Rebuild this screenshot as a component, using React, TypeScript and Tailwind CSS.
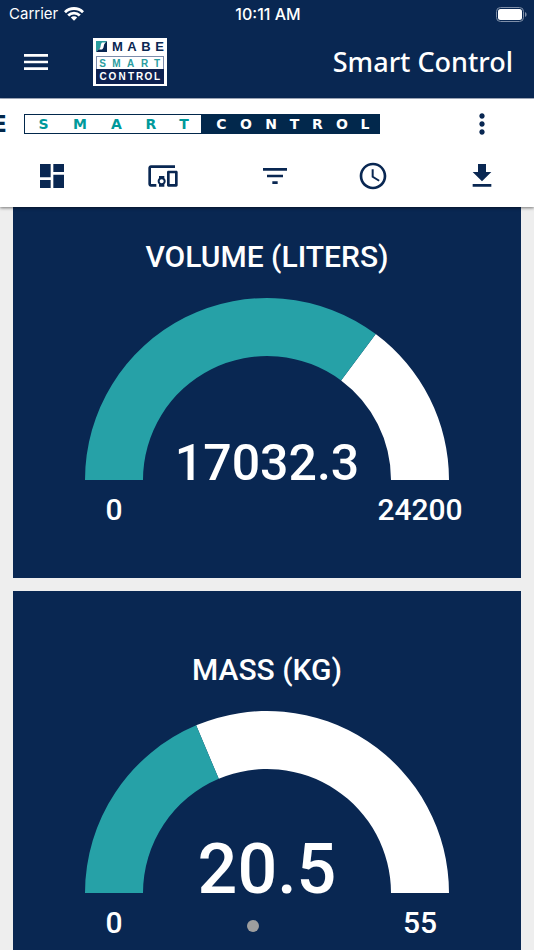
import {
  MdAccessTime,
  MdDashboard,
  MdDevicesOther,
  MdFileDownload,
  MdFilterList,
  MdMenu,
  MdMoreVert,
} from 'react-icons/md';

interface Gauge {
  title: string;
  value: number;
  max: number;
  fontSize: number;
}

const gauges: Gauge[] = [
  { title: 'VOLUME (LITERS)', value: 17032.3, max: 24200, fontSize: 50 },
  { title: 'MASS (KG)', value: 20.5, max: 55, fontSize: 70 },
];

const actions = [
  { label: 'Dashboards', Icon: MdDashboard },
  { label: 'Entities', Icon: MdDevicesOther },
  { label: 'Filters', Icon: MdFilterList },
  { label: 'Time window', Icon: MdAccessTime },
  { label: 'Export', Icon: MdFileDownload },
];

const OUTER = 182;
const INNER = 124;

// half ring slice between two fractions of the dial, 0 = left, 1 = right
const arcPath = (from: number, to: number) => {
  const point = (r: number, f: number) => {
    const a = Math.PI * (1 - f);
    return `${OUTER + r * Math.cos(a)} ${OUTER - r * Math.sin(a)}`;
  };
  return `M${point(OUTER, from)}A${OUTER} ${OUTER} 0 0 1 ${point(OUTER, to)}L${point(INNER, to)}A${INNER} ${INNER} 0 0 0 ${point(INNER, from)}Z`;
};

const StatusBar = () => (
  <div className="grid grid-cols-3 items-center h-7 pl-[9px] pr-[7px] font-['Inter',sans-serif] text-[15px] leading-5">
    <div className="flex items-center gap-1.5">
      <span>Carrier</span>
      <svg viewBox="0 0 20 14" className="w-5 h-[14px]" fill="none" stroke="currentColor" strokeWidth="2.8">
        <path d="M1 5.2a12.8 12.8 0 0 1 18 0" />
        <path d="M4.2 8.6a8.2 8.2 0 0 1 11.6 0" />
        <path d="M10 13.8 6.8 10.6a4.5 4.5 0 0 1 6.400 0z" fill="currentColor" stroke="none" />
      </svg>
    </div>
    <span className="text-center font-medium text-base leading-5">10:11 AM</span>
    <svg viewBox="0 0 31 15" className="w-[31px] h-[15px] justify-self-end">
      <rect x="0.5" y="0.5" width="27" height="14" rx="4" fill="none" stroke="#7f8fa8" />
      <rect x="2" y="2" width="24" height="11" rx="2.5" fill="#fff" />
      <path d="M29 5v5c1-.4 1.600-1.400 1.600-2.500s-.6-2.100-1.600-2.500z" fill="#7f8fa8" />
    </svg>
  </div>
);

const Logo = () => (
  <svg viewBox="0 0 74 48" className="w-[74px] h-12" fontFamily="Liberation Sans, sans-serif" fontWeight="bold" textAnchor="middle">
    <rect width="74" height="48" fill="#fff" />
    <path d="M3 3h11L3 14z" fill="#2a9d9f" />
    <path d="M14 3v11H3z" fill="#092752" />
    <path d="M6 11.500c2.500-2 1-5 3-7h3.500c-2.500 2-1 5.500-3.500 7z" fill="#fff" />
    <text x="24.500 39 53 66.500" y="13" fontSize="13" fill="#092752">MABE</text>
    <rect x="3.500" y="18.500" width="67" height="27" fill="#fff" stroke="#7c8cab" />
    <text x="9.500 23.500 37.500 51.500 64" y="28.500" fontSize="10" fill="#2a9d9f">SMART</text>
    <rect x="3" y="31" width="68" height="15" fill="#0d2150" />
    <text x="10 19.500 29 38 46.500 55.500 64" y="42" fontSize="10" fill="#fff">CONTROL</text>
  </svg>
);

const Banner = () => (
  <svg viewBox="0 0 380 20" className="w-[380px] h-5" fontFamily="DejaVu Sans, sans-serif" fontWeight="bold" textAnchor="middle">
    <text x="-1" y="18" fontSize="23" fill="#02284c">E</text>
    <rect x="24.500" y="0.500" width="355" height="19" fill="#fff" stroke="#02284c" />
    <text x="43.500 80 116.500 151 184" y="15" fontSize="14" fill="#00999b">SMART</text>
    <rect x="201" width="179" height="20" fill="#02284c" />
    <text x="221.500 246 271 294.500 317.500 342 365" y="15" fontSize="14" fill="#fff">CONTROL</text>
  </svg>
);

const GaugeCard = ({ title, value, max, fontSize }: Gauge) => {
  const ratio = value / max;

  return (
    <section className="h-[400px] shrink-0 flex flex-col items-center pt-[61px] bg-[#092752] text-white font-['Roboto',sans-serif] font-medium text-[30px] leading-9">
      <h2>{title}</h2>
      <svg viewBox="0 0 364 182" className="mt-[23px] w-full max-w-[364px] overflow-visible">
        <path d={arcPath(ratio, 1)} fill="#fff" />
        <path d={arcPath(0, ratio)} fill="#26a1a7" />
        <text x="182" y="182" textAnchor="middle" fontSize={fontSize} fill="#fff">{value}</text>
      </svg>
      <div className="mt-3 flex justify-between w-full max-w-[364px]">
        <span className="w-[58px] flex justify-center">0</span>
        <span className="w-[58px] flex justify-center">{max}</span>
      </div>
    </section>
  );
};

const App = () => {
  return (
    <div className="relative h-screen flex flex-col overflow-hidden bg-[#eeeeee]">
      <header className="bg-[#092752] text-white border-b border-[#a9b3c6]">
        <StatusBar />
        <div className="flex items-center h-[70px] pl-5 pr-[21px] pb-[3px]">
          <button aria-label="Menu">
            <MdMenu size={32} />
          </button>
          <a href="#" aria-label="Home" className="ml-[41px]">
            <Logo />
          </a>
          <h1 className="ml-auto font-['Noto_Sans',sans-serif] font-medium text-[27px] leading-9">Smart Control</h1>
        </div>
      </header>

      <div className="relative z-10 bg-white text-[#092752] shadow-[0_1px_3px_rgba(0,0,0,0.5)]">
        <div className="flex items-center justify-between h-[50px] pr-9">
          <Banner />
          <button aria-label="More">
            <MdMoreVert size={32} />
          </button>
        </div>
        <div className="grid grid-cols-[32px_58px_32px_32px_53px] justify-between justify-items-center items-center h-[58px] pl-9 pr-[26px] pb-1">
          {actions.map(({ label, Icon }) => (
            <button key={label} aria-label={label}>
              <Icon size={32} />
            </button>
          ))}
        </div>
      </div>

      {/* list is scrolled slightly under the toolbar */}
      <main className="-mt-[29px] flex-1 min-h-0 overflow-hidden px-[13px] flex flex-col gap-[13px]">
        {gauges.map((gauge) => (
          <GaugeCard key={gauge.title} {...gauge} />
        ))}
      </main>

      <span className="absolute bottom-[18px] left-1/2 -ml-5 size-3 rounded-full bg-[#9e9e9e]"></span>
    </div>
  );
};

export default App;
